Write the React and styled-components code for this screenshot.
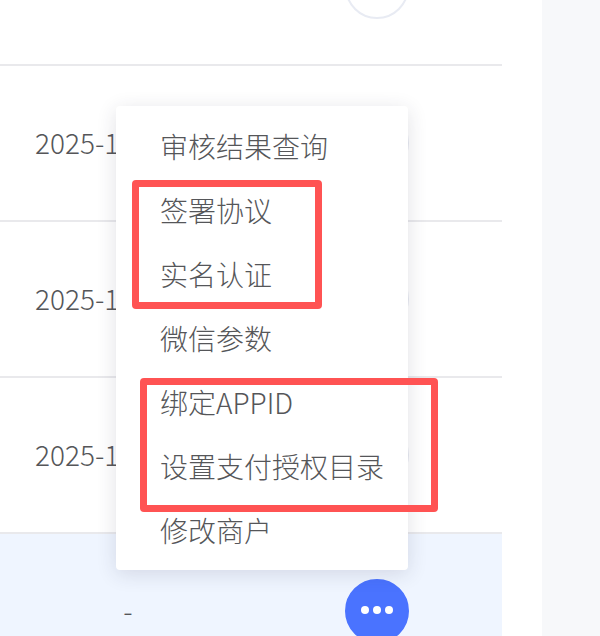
import React from "react";
import styled, { createGlobalStyle } from "styled-components";

const GlobalStyle = createGlobalStyle`
  html, body {
    margin: 0;
    padding: 0;
    background: #fff;
  }
`;

const Page = styled.div`
  position: relative;
  display: flex;
  width: 600px;
  height: 636px;
  overflow: hidden;
  font-family: "Noto Sans CJK SC", "Open Sans", sans-serif;
  font-size: 28px;
  font-weight: 300;
  color: #555659;
`;

const Table = styled.div`
  width: 502px;
  margin-top: -90px;
  flex-shrink: 0;
`;

const Row = styled.div`
  display: flex;
  align-items: center;
  box-sizing: border-box;
  height: 156px;
  border-bottom: 2px solid #e9e9ec;
  background: ${(p) => (p.$active ? "#eff5ff" : "#fff")};
`;

const DateCell = styled.div`
  width: 345px;
  box-sizing: border-box;
  padding: 0 0 2px 35px;
  white-space: nowrap;
`;

const DashCell = styled.div`
  width: 345px;
  padding: 0 89px 2px 0;
  box-sizing: border-box;
  text-align: center;
`;

const MoreButton = styled.button`
  display: flex;
  align-items: center;
  justify-content: center;
  width: 64px;
  height: 64px;
  padding: 0;
  box-sizing: border-box;
  border-radius: 50%;
  border: 2px solid ${(p) => (p.$primary ? "#4a73ff" : "#e8ebf3")};
  background: ${(p) => (p.$primary ? "#4a73ff" : "#fff")};
  color: ${(p) => (p.$primary ? "#fff" : "#c0c4cc")};
`;

const SidePanel = styled.div`
  flex: 1;
  margin-left: 40px;
  background: #f7f8fa;
`;

const Menu = styled.ul`
  position: absolute;
  left: 116px;
  top: 106px;
  width: 292px;
  margin: 0;
  padding: 8px 0;
  list-style: none;
  background: #fff;
  border-radius: 4px;
  box-shadow: 0 4px 20px rgba(40, 40, 70, 0.14);
`;

const MenuItem = styled.li`
  padding-left: 44px;
  line-height: 64px;
  height: 64px;
  white-space: nowrap;
`;

const Marker = styled.div`
  position: absolute;
  left: ${(p) => p.$left}px;
  top: ${(p) => p.$top}px;
  width: ${(p) => p.$width}px;
  height: ${(p) => p.$height}px;
  box-sizing: border-box;
  border: 7px solid #ff5353;
  border-radius: 4px;
`;

const Dots = () => (
  <svg width="32" height="10" viewBox="0 0 32 10" fill="currentColor">
    <circle cx="4" cy="4" r="4" />
    <circle cx="16" cy="4" r="4" />
    <circle cx="28" cy="4" r="4" />
  </svg>
);

const menuItems = [
  "审核结果查询",
  "签署协议",
  "实名认证",
  "微信参数",
  "绑定APPID",
  "设置支付授权目录",
  "修改商户",
];

// first row is scrolled up, only its button still shows
const rows = ["", "2025-11-20 10:30", "2025-11-20 10:30", "2025-11-20 10:30"];

export default function App() {
  return (
    <Page>
      <GlobalStyle />
      <Table>
        {rows.map((date, i) => (
          <Row key={i}>
            <DateCell>{date}</DateCell>
            <MoreButton>
              <Dots />
            </MoreButton>
          </Row>
        ))}
        <Row $active>
          <DashCell>-</DashCell>
          <MoreButton $primary>
            <Dots />
          </MoreButton>
        </Row>
      </Table>
      <SidePanel />
      <Menu>
        {menuItems.map((item) => (
          <MenuItem key={item}>{item}</MenuItem>
        ))}
      </Menu>
      <Marker $left={132} $top={180} $width={190} $height={129} />
      <Marker $left={140} $top={378} $width={298} $height={134} />
    </Page>
  );
}
